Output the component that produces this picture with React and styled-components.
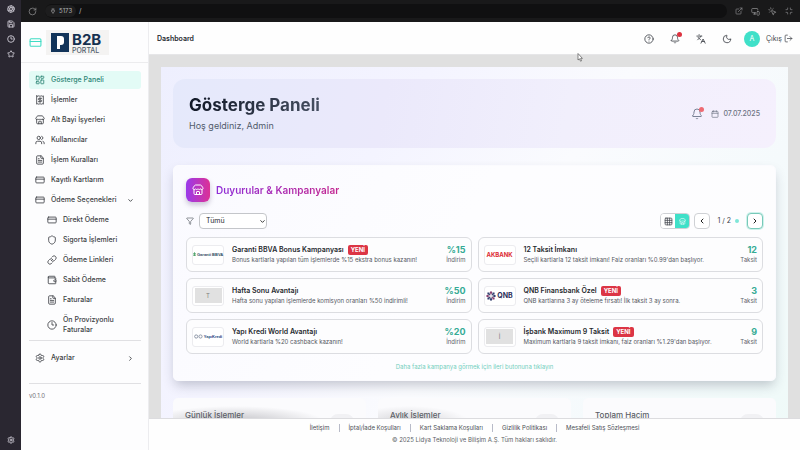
import React from 'react';
import styled, { createGlobalStyle, css } from 'styled-components';
import {
  RotateCw, Plug, ExternalLink, MonitorSmartphone, MousePointerClick, Minimize, Aperture,
  Clock3, Star, Settings, CreditCard, LayoutDashboard, Receipt, Store, Users, FileText,
  ChevronDown, ChevronRight, ChevronLeft, Shield, Link, Wallet, HelpCircle, Bell,
  Languages, Moon, LogOut, Calendar, Filter, Grid3x3, Save,
} from 'lucide-react';

const GlobalStyle = createGlobalStyle`
  *, *::before, *::after { box-sizing: border-box; }
  body {
    margin: 0;
    font-family: Inter, "Noto Sans", sans-serif;
    font-size: 7px;
    line-height: 10px;
    color: #3a3d42;
    background: #fdfdfd;
  }
  h1, h2, h3, p, ul { margin: 0; padding: 0; }
  ul { list-style: none; }
  a { color: inherit; text-decoration: none; }
  button, select { font: inherit; color: inherit; margin: 0; }
  button { padding: 0; border: 0; background: none; display: inline-flex; align-items: center; justify-content: center; cursor: pointer; }
  svg { flex-shrink: 0; display: block; }
`;

const Window = styled.div`
  display: flex;
  height: 100vh;
  overflow: hidden;
`;

const Rail = styled.nav`
  width: 21px;
  flex-shrink: 0;
  display: flex;
  flex-direction: column;
  align-items: center;
  gap: 7px;
  padding: 5px 0 6px;
  background: #2a2731;
  color: #bdbac4;
`;

const RailButton = styled.button`
  height: 8px;
  &:last-child { margin-top: auto; }
`;

const Browser = styled.div`
  flex: 1;
  min-width: 0;
  display: flex;
  flex-direction: column;
`;

const AddressBar = styled.div`
  height: 22px;
  flex-shrink: 0;
  display: flex;
  align-items: center;
  gap: 8px;
  padding: 0 7px;
  background: #19191a;
  color: #8d8d8f;
`;

const Address = styled.div`
  flex: 1;
  height: 14px;
  display: flex;
  align-items: center;
  gap: 3px;
  border-radius: 7px;
  background: #101011;
  color: #b5b5b7;
`;

const Port = styled.span`
  display: flex;
  align-items: center;
  gap: 3px;
  height: 12px;
  padding: 0 4px 0 5px;
  border-radius: 6px;
  background: #1d1d1e;
  font-size: 6px;
`;

const BrowserActions = styled.div`
  display: flex;
  gap: 8px;
`;

const Shell = styled.div`
  flex: 1;
  min-height: 0;
  display: flex;
`;

const Sidebar = styled.aside`
  width: 128px;
  flex-shrink: 0;
  background: #fdfdfe;
  border-right: 1px solid #ececef;
`;

const Brand = styled.a`
  display: flex;
  align-items: center;
  gap: 4px;
  height: 41px;
  padding: 0 8px;
  color: #3fdcc4;
  border-bottom: 1px solid #ececee;
`;

const BrandPlate = styled.span`
  display: flex;
  align-items: center;
  gap: 3px;
  height: 25px;
  padding: 0 8px 0 5px;
  background: #f4f3f2;
`;

const BrandWords = styled.span`
  display: flex;
  flex-direction: column;
  padding-top: 2px;
  color: #15304f;
  font-size: 15px;
  font-weight: 700;
  line-height: 15px;
  small { font-size: 7px; font-weight: 500; line-height: 8px; color: #52606c; }
`;

const Menu = styled.ul`
  display: flex;
  flex-direction: column;
  gap: 2px;
  margin: 0 7px 0 8px;
  padding: ${p => (p.$first ? '8px 0 1px' : '8px 0 16px')};
  border-bottom: 1px solid #e0e0e3;
`;

const MenuLink = styled.a`
  display: flex;
  align-items: center;
  gap: 6px;
  min-height: 18px;
  padding: 4px 7px 4px 6px;
  border-radius: 3px;
  font-weight: 500;
  color: #3c3f44;
  ${p => p.$nested && css`padding-left: 18px;`}
  ${p => p.$active && css`background: #e3fbf6; color: #2b8475;`}
  span { flex: 1; }
`;

const Version = styled.p`
  padding: 7px 8px;
  font-size: 6px;
  color: #6c6f76;
`;

const Page = styled.div`
  flex: 1;
  min-width: 0;
  display: flex;
  flex-direction: column;
`;

const Header = styled.header`
  height: 33px;
  flex-shrink: 0;
  display: flex;
  align-items: center;
  gap: 12px;
  padding: 1px 7px 0 8px;
  background: #fefefe;
  border-bottom: 1px solid #e6e6e8;
`;

const Crumb = styled.h3`
  flex: 1;
  font-size: 7px;
  font-weight: 600;
  color: #26292e;
`;

const IconButton = styled.button`
  position: relative;
  width: 14px;
  height: 14px;
  color: ${p => (p.$muted ? '#7b8296' : '#3e4249')};
`;

const AlertDot = styled.i`
  position: absolute;
  top: 0;
  right: 0;
  width: 5px;
  height: 5px;
  border-radius: 50%;
  background: ${p => (p.$soft ? '#ee6a72' : '#dd3340')};
`;

const Account = styled.div`
  display: flex;
  align-items: center;
  gap: 6px;
  margin-left: -2px;
`;

const Avatar = styled.span`
  width: 16px;
  height: 16px;
  border-radius: 50%;
  background: #3fe0c8;
  color: #fff;
  display: grid;
  place-items: center;
`;

const Logout = styled.button`
  gap: 2px;
  color: #45484f;
`;

const Scroller = styled.main`
  flex: 1;
  min-height: 0;
  overflow: hidden;
  padding: 12px 12px 0;
  background: #e0e0e0;
`;

const Canvas = styled.div`
  display: flex;
  flex-direction: column;
  gap: 17px;
  min-height: 100%;
  padding: 12px;
  background: linear-gradient(125deg, #eeeffe 0%, #f4f4ff 30%, #fafbfe 52%, #f5fafc 75%, #eefaf8 100%);
`;

const Hero = styled.section`
  display: flex;
  align-items: center;
  justify-content: space-between;
  padding: 16px;
  border-radius: 12px;
  background: linear-gradient(100deg, #e5e9fb, #ebe9fb 35%, #f1effc 65%, #f5f0fd);
`;

const HeroTitle = styled.h1`
  font-size: 17px;
  line-height: 20px;
  font-weight: 700;
  color: transparent;
  background: linear-gradient(90deg, #111827, #454e60);
  background-clip: text;
`;

const HeroText = styled.p`
  margin-top: 5px;
  font-size: 9px;
  line-height: 12px;
  color: #515b6b;
`;

const HeroMeta = styled.div`
  display: flex;
  align-items: center;
  gap: 7px;
  color: #6d7383;
  font-weight: 500;
  time { display: flex; align-items: center; gap: 4px; font-size: 7px; }
`;

const Panel = styled.section`
  padding: 12px 12px 8px;
  border: 1px solid #fbfbfe;
  border-radius: 5px;
  background: linear-gradient(120deg, #fafaff, #fdfdff 45%, #fdfdfe);
  box-shadow: 0 6px 12px -2px rgba(40, 45, 70, 0.26);
`;

const PanelHead = styled.div`
  display: flex;
  align-items: center;
  gap: 6px;
`;

const PanelIcon = styled.span`
  width: 24px;
  height: 24px;
  border-radius: 6px;
  display: grid;
  place-items: center;
  color: #fff;
  background: linear-gradient(90deg, #9a3aea, #dc3195);
  box-shadow: 0 3px 5px rgba(60, 40, 90, 0.25);
`;

const PanelTitle = styled.h2`
  font-size: 10px;
  line-height: 14px;
  font-weight: 600;
  color: transparent;
  background: linear-gradient(90deg, #8f2fd8, #c32790);
  background-clip: text;
`;

const Toolbar = styled.div`
  display: flex;
  align-items: center;
  justify-content: space-between;
  margin: 11px 0 8px;
`;

const Cluster = styled.div`
  display: flex;
  align-items: center;
  gap: ${p => p.$gap}px;
  color: #5c6068;
`;

const SelectBox = styled.label`
  display: grid;
  align-items: center;
  svg { grid-area: 1 / 1; justify-self: end; margin-right: 1px; pointer-events: none; color: #222; }
`;

const Select = styled.select`
  grid-area: 1 / 1;
  appearance: none;
  width: 68px;
  height: 16px;
  padding: 0 6px;
  border: 1px solid #c4c6ca;
  border-radius: 4px;
  background: #fff;
  color: #26292e;
`;

const Toggle = styled.div`
  display: flex;
  overflow: hidden;
  height: 16px;
  border: 1px solid #cfd1d5;
  border-radius: 4px;
`;

const ToggleButton = styled.button`
  width: 14px;
  color: ${p => (p.$on ? '#fff' : '#42464d')};
  background: ${p => (p.$on ? '#3fe0c8' : '#fff')};
`;

const StepButton = styled.button`
  width: 16px;
  height: 16px;
  border: 1px solid ${p => (p.$focus ? '#78c9b9' : '#cfd1d5')};
  border-radius: 4px;
  background: #fff;
  color: #222;
  ${p => p.$focus && css`box-shadow: 0 0 0 1px #cdf2eb;`}
`;

const Pager = styled.span`
  display: flex;
  align-items: center;
  gap: 4px;
  padding: 0 4px 0 3px;
  color: #3e4249;
  i { width: 4px; height: 4px; border-radius: 50%; background: #7fe6d8; }
`;

const Offers = styled.div`
  display: grid;
  grid-template-columns: 1fr 1fr;
  gap: 6px;
`;

const Offer = styled.article`
  display: flex;
  align-items: center;
  gap: 8px;
  height: 35px;
  padding: 0 5px;
  border: 1px solid #dcdde1;
  border-radius: 6px;
  background: #fdfdfe;
`;

const LogoBox = styled.div`
  width: 32px;
  height: 20px;
  flex-shrink: 0;
  display: grid;
  place-items: center;
  border: 1px solid #ececef;
  border-radius: 3px;
  background: #fff;
`;

const Initial = styled.span`
  width: 27px;
  height: 15px;
  display: grid;
  place-items: center;
  background: #e1e1e1;
  color: #7d7d7d;
  font-size: 6px;
`;

const OfferBody = styled.div`
  flex: 1;
  min-width: 0;
  font-size: 6px;
  color: #54575e;
  white-space: nowrap;
`;

const OfferTitle = styled.h3`
  display: flex;
  align-items: center;
  gap: 4px;
  height: 11px;
  font-size: 7px;
  font-weight: 600;
  color: #26292e;
`;

const Badge = styled.span`
  padding: 0 3px;
  border-radius: 2px;
  background: #dc3545;
  color: #fff;
  font-size: 6px;
  font-weight: 700;
`;

const Amount = styled.div`
  text-align: right;
  font-size: 6px;
  color: #5f636a;
  strong { display: block; font-size: 9px; line-height: 11px; font-weight: 700; color: #35ab95; }
`;

const Hint = styled.p`
  margin-top: 8px;
  text-align: center;
  font-size: 6px;
  color: #73cfbd;
`;

const Stats = styled.div`
  display: grid;
  grid-template-columns: repeat(3, 1fr);
  gap: 12px;
`;

const Stat = styled.section`
  display: flex;
  justify-content: space-between;
  height: 60px;
  padding: 12px;
  border-radius: 5px;
  font-size: 8px;
  font-weight: 500;
  color: #5c5f67;
  background: ${p => `radial-gradient(ellipse ${p.$spread} 16px at ${p.$at} 24px, rgba(80, 80, 90, ${p.$shade}), transparent), #fbfbfd`};
`;

const StatIcon = styled.span`
  width: 24px;
  height: 24px;
  margin-top: 4px;
  border-radius: 8px;
  background: #f1f1f4;
`;

const Footer = styled.footer`
  flex-shrink: 0;
  height: 32px;
  padding-top: 5px;
  border-top: 1px solid #dcdcdf;
  background: #fefefe;
  text-align: center;
  font-size: 6px;
  color: #4b4e55;
  p { margin-top: 3px; color: #5c5f66; }
`;

const FooterLinks = styled.nav`
  display: flex;
  justify-content: center;
  a { padding: 0 9px; line-height: 8px; }
  a + a { border-left: 1px solid #b8bbc8; }
`;

const Pointer = styled.svg`
  position: absolute;
  left: 577px;
  top: 53px;
`;

const BrandMark = () => (
  <svg width="18" height="19" viewBox="0 0 18 19">
    <rect width="18" height="19" fill="#12345a" />
    <rect x="6" y="3" width="3" height="13" fill="#fff" />
    <rect x="6" y="3" width="7" height="9" rx="3" fill="#fff" />
  </svg>
);

const Wordmark = styled.span`
  display: flex;
  align-items: center;
  gap: 1px;
  line-height: 7px;
  font-family: ${p => (p.$plain ? '"Liberation Sans", sans-serif' : 'inherit')};
  font-weight: 700;
  white-space: nowrap;
  font-size: ${p => p.$size}px;
  color: ${p => p.$color};
`;

const petals = [0, 45, 90, 135, 180, 225, 270, 315];

const logos = {
  garanti: (
    <Wordmark $size={4} $plain $color="#2c4a5e">
      <svg width="3" height="5" viewBox="0 0 4 6"><path d="M0 2h4M2 0v5M0 4h4" stroke="#3d9a5b" /></svg>
      Garanti BBVA
    </Wordmark>
  ),
  akbank: <Wordmark $size={6} $color="#dc2b35">AKBANK</Wordmark>,
  qnb: (
    <Wordmark $size={7} $color="#2b2f5a">
      <svg width="10" height="10" viewBox="0 0 10 10">
        {petals.map((a, i) => (
          <path key={a} d="M5 4.2L3.7 1.2L5 0L6.3 1.2Z" transform={`rotate(${a} 5 5)`} fill={i % 3 ? '#33406f' : '#87406f'} />
        ))}
      </svg>
      QNB
    </Wordmark>
  ),
  yapi: (
    <Wordmark $size={4} $plain $color="#23487f">
      <svg width="9" height="5" viewBox="0 0 9 5" fill="none" stroke="#8f98a8">
        <circle cx="2.2" cy="2.5" r="1.6" /><circle cx="6.5" cy="2.5" r="1.6" />
      </svg>
      YapıKredi
    </Wordmark>
  ),
};

const offers = [
  { logo: 'garanti', title: 'Garanti BBVA Bonus Kampanyası', fresh: true, text: 'Bonus kartlarla yapılan tüm işlemlerde %15 ekstra bonus kazanın!', amount: '%15', unit: 'İndirim' },
  { logo: 'akbank', title: '12 Taksit İmkanı', text: 'Seçili kartlarla 12 taksit imkanı! Faiz oranları %0.99\'dan başlıyor.', amount: '12', unit: 'Taksit' },
  { initial: 'T', title: 'Hafta Sonu Avantajı', text: 'Hafta sonu yapılan işlemlerde komisyon oranları %50 indirimli!', amount: '%50', unit: 'İndirim' },
  { logo: 'qnb', title: 'QNB Finansbank Özel', fresh: true, text: 'QNB kartlarına 3 ay öteleme fırsatı! İlk taksit 3 ay sonra.', amount: '3', unit: 'Taksit' },
  { logo: 'yapi', title: 'Yapı Kredi World Avantajı', text: 'World kartlarla %20 cashback kazanın!', amount: '%20', unit: 'İndirim' },
  { initial: 'İ', title: 'İşbank Maximum 9 Taksit', fresh: true, text: 'Maximum kartlarla 9 taksit imkanı, faiz oranları %1.29\'dan başlıyor.', amount: '9', unit: 'Taksit' },
];

const menu = [
  { label: 'Gösterge Paneli', icon: LayoutDashboard, active: true },
  { label: 'İşlemler', icon: Receipt },
  { label: 'Alt Bayi İşyerleri', icon: Store },
  { label: 'Kullanıcılar', icon: Users },
  { label: 'İşlem Kuralları', icon: FileText },
  { label: 'Kayıtlı Kartlarım', icon: CreditCard },
  { label: 'Ödeme Seçenekleri', icon: CreditCard, caret: ChevronDown },
  { label: 'Direkt Ödeme', icon: CreditCard, nested: true },
  { label: 'Sigorta İşlemleri', icon: Shield, nested: true },
  { label: 'Ödeme Linkleri', icon: Link, nested: true },
  { label: 'Sabit Ödeme', icon: Wallet, nested: true },
  { label: 'Faturalar', icon: FileText, nested: true },
  { label: 'Ön Provizyonlu Faturalar', icon: Clock3, nested: true },
];

const stats = [
  { label: 'Günlük İşlemler', spread: '90px', at: '32%', shade: 0.34 },
  { label: 'Aylık İşlemler', spread: '60px', at: '16%', shade: 0.24 },
  { label: 'Toplam Hacim', spread: '60px', at: '10%', shade: 0 },
];

const legal = ['İletişim', 'İptal/İade Koşulları', 'Kart Saklama Koşulları', 'Gizlilik Politikası', 'Mesafeli Satış Sözleşmesi'];

const MenuItem = ({ label, icon: Icon, caret: Caret, active, nested }) => (
  <li>
    <MenuLink href="#" $active={active} $nested={nested}>
      <Icon size={10} />
      <span>{label}</span>
      {Caret && <Caret size={7} strokeWidth={3} />}
    </MenuLink>
  </li>
);

const OfferCard = ({ logo, initial, title, fresh, text, amount, unit }) => (
  <Offer>
    <LogoBox>{logo ? logos[logo] : <Initial>{initial}</Initial>}</LogoBox>
    <OfferBody>
      <OfferTitle>{title}{fresh && <Badge>YENİ</Badge>}</OfferTitle>
      <p>{text}</p>
    </OfferBody>
    <Amount><strong>{amount}</strong>{unit}</Amount>
  </Offer>
);

export default function App() {
  return (
    <Window>
      <GlobalStyle />
      <Rail>
        <RailButton aria-label="Ana ekran"><Aperture size={8} strokeWidth={3} /></RailButton>
        <RailButton aria-label="Dosyalar"><Save size={8} strokeWidth={3} /></RailButton>
        <RailButton aria-label="Geçmiş"><Clock3 size={8} strokeWidth={3} /></RailButton>
        <RailButton aria-label="Favoriler"><Star size={8} strokeWidth={3} /></RailButton>
        <RailButton aria-label="Tercihler"><Settings size={8} strokeWidth={3} /></RailButton>
      </Rail>
      <Browser>
        <AddressBar>
          <button aria-label="Yenile"><RotateCw size={9} /></button>
          <Address>
            <Port><Plug size={6} />5173</Port>/
          </Address>
          <BrowserActions>
            <button aria-label="Yeni pencere"><ExternalLink size={8} /></button>
            <button aria-label="Cihazlar"><MonitorSmartphone size={9} /></button>
            <button aria-label="Seç"><MousePointerClick size={9} /></button>
            <button aria-label="Küçült"><Minimize size={8} /></button>
          </BrowserActions>
        </AddressBar>
        <Shell>
          <Sidebar>
            <Brand href="#">
              <CreditCard size={13} strokeWidth={2} />
              <BrandPlate>
                <BrandMark />
                <BrandWords>B2B<small>PORTAL</small></BrandWords>
              </BrandPlate>
            </Brand>
            <Menu $first>{menu.map(m => <MenuItem key={m.label} {...m} />)}</Menu>
            <Menu><MenuItem label="Ayarlar" icon={Settings} caret={ChevronRight} /></Menu>
            <Version>v0.1.0</Version>
          </Sidebar>
          <Page>
            <Header>
              <Crumb>Dashboard</Crumb>
              <IconButton aria-label="Yardım"><HelpCircle size={10} /></IconButton>
              <IconButton aria-label="Bildirimler"><Bell size={10} /><AlertDot /></IconButton>
              <IconButton aria-label="Dil"><Languages size={10} /></IconButton>
              <IconButton aria-label="Tema"><Moon size={10} /></IconButton>
              <Account>
                <Avatar>A</Avatar>
                <Logout>Çıkış<LogOut size={9} /></Logout>
              </Account>
            </Header>
            <Scroller>
              <Canvas>
                <Hero>
                  <div>
                    <HeroTitle>Gösterge Paneli</HeroTitle>
                    <HeroText>Hoş geldiniz, Admin</HeroText>
                  </div>
                  <HeroMeta>
                    <IconButton $muted aria-label="Uyarılar"><Bell size={12} strokeWidth={2} /><AlertDot $soft /></IconButton>
                    <time dateTime="2025-07-07"><Calendar size={8} />07.07.2025</time>
                  </HeroMeta>
                </Hero>
                <Panel>
                  <PanelHead>
                    <PanelIcon><Store size={12} /></PanelIcon>
                    <PanelTitle>Duyurular &amp; Kampanyalar</PanelTitle>
                  </PanelHead>
                  <Toolbar>
                    <Cluster $gap={5}>
                      <Filter size={8} />
                      <SelectBox>
                        <Select aria-label="Kampanya filtresi" defaultValue="all"><option value="all">Tümü</option></Select>
                        <ChevronDown size={7} strokeWidth={3} />
                      </SelectBox>
                    </Cluster>
                    <Cluster $gap={4}>
                      <Toggle>
                        <ToggleButton aria-label="Izgara"><Grid3x3 size={9} /></ToggleButton>
                        <ToggleButton $on aria-label="Liste"><Store size={7} /></ToggleButton>
                      </Toggle>
                      <StepButton aria-label="Geri"><ChevronLeft size={8} strokeWidth={3} /></StepButton>
                      <Pager>1 / 2<i /></Pager>
                      <StepButton $focus aria-label="İleri"><ChevronRight size={8} strokeWidth={3} /></StepButton>
                    </Cluster>
                  </Toolbar>
                  <Offers>{offers.map(o => <OfferCard key={o.title} {...o} />)}</Offers>
                  <Hint>Daha fazla kampanya görmek için ileri butonuna tıklayın</Hint>
                </Panel>
                <Stats>
                  {stats.map(s => (
                    <Stat key={s.label} $spread={s.spread} $at={s.at} $shade={s.shade}>
                      {s.label}
                      <StatIcon />
                    </Stat>
                  ))}
                </Stats>
              </Canvas>
            </Scroller>
            <Footer>
              <FooterLinks>{legal.map(l => <a href="#" key={l}>{l}</a>)}</FooterLinks>
              <p>© 2025 Lidya Teknoloji ve Bilişim A.Ş. Tüm hakları saklıdır.</p>
            </Footer>
          </Page>
        </Shell>
      </Browser>
      <Pointer width="6" height="9" viewBox="0 0 6 9">
        <path d="M1 0.5V7L2.5 5.8L3.5 8.2L4.5 7.8L3.6 5.4H5.4Z" fill="#fff" stroke="#555" strokeWidth="0.7" />
      </Pointer>
    </Window>
  );
}
